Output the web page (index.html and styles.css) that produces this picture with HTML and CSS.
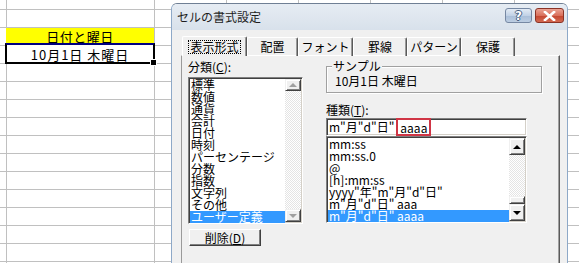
FILE: index.html
```html
<!DOCTYPE html>
<html lang="ja">
<head>
    <meta charset="UTF-8">
    <title>セルの書式設定</title>
    <link rel="stylesheet" href="styles.css">
</head>
<body>
    <div class="sheet">
        <div class="cell-title">日付と曜日</div>
        <div class="cell-date">10月1日 木曜日<span class="fill-handle"></span></div>
    </div>

    <div class="dialog">
        <div class="titlebar">
            <span class="title">セルの書式設定</span>
            <div class="caption-buttons">
                <span class="cap-btn help">?</span>
                <span class="cap-btn close">
                    <svg width="13" height="10" viewBox="0 0 13 10">
                        <path d="M2 1 L11 9 M11 1 L2 9" stroke="#fff" stroke-width="2.6" stroke-linecap="square"/>
                    </svg>
                </span>
            </div>
        </div>

        <div class="client">
            <div class="tabs">
                <div class="tab active"><span class="focus">表示形式</span></div>
                <div class="tab w51">配置</div>
                <div class="tab w55">フォント</div>
                <div class="tab w54">罫線</div>
                <div class="tab w54">パターン</div>
                <div class="tab w54">保護</div>
            </div>

            <div class="panel">
                <div class="col-left">
                    <div class="label">分類(<u>C</u>):</div>
                    <div class="listbox category">
                        <ul class="items">
                            <li>標準</li>
                            <li>数値</li>
                            <li>通貨</li>
                            <li>会計</li>
                            <li>日付</li>
                            <li>時刻</li>
                            <li>パーセンテージ</li>
                            <li>分数</li>
                            <li>指数</li>
                            <li>文字列</li>
                            <li>その他</li>
                            <li class="selected">ユーザー定義</li>
                        </ul>
                        <div class="scrollbar disabled">
                            <div class="arrow up"><i></i></div>
                            <div class="track"></div>
                            <div class="arrow down"><i></i></div>
                        </div>
                    </div>
                    <div class="button">削除(<u>D</u>)</div>
                </div>

                <div class="col-right">
                    <div class="sample">
                        <span class="sample-label">サンプル</span>
                        <div class="sample-value">10月1日 木曜日</div>
                    </div>
                    <div class="label kind">種類(<u>T</u>):</div>
                    <div class="textbox">m"月"d"日"<span class="mark">aaaa</span></div>
                    <div class="listbox types">
                        <ul class="items">
                            <li>mm:ss</li>
                            <li>mm:ss.0</li>
                            <li>@</li>
                            <li>[h]:mm:ss</li>
                            <li>yyyy"年"m"月"d"日"</li>
                            <li>m"月"d"日" aaa</li>
                            <li class="selected">m"月"d"日" aaaa</li>
                        </ul>
                        <div class="scrollbar">
                            <div class="arrow up big"><i></i></div>
                            <div class="track"></div>
                            <div class="thumb"></div>
                            <div class="arrow down big"><i></i></div>
                        </div>
                    </div>
                </div>
            </div>
        </div>
    </div>
</body>
</html>
```

FILE: styles.css
```css
body {
    margin: 0;
    width: 579px;
    height: 263px;
    overflow: hidden;
    position: relative;
    font-family: "Noto Sans CJK JP", "Noto Sans", sans-serif;
    font-size: 12px;
    color: #000;
}

/* spreadsheet behind the dialog */
.sheet {
    width: 579px;
    height: 263px;
    box-sizing: border-box;
    padding: 28px 0 0 6px;
    background:
        linear-gradient(#c0c0c0, #c0c0c0) 6px 0 / 1px 100% no-repeat,
        linear-gradient(#c0c0c0, #c0c0c0) 154px 0 / 1px 100% no-repeat,
        linear-gradient(#c0c0c0, #c0c0c0) 226px 0 / 1px 100% no-repeat,
        linear-gradient(#c0c0c0, #c0c0c0) 298px 0 / 1px 100% no-repeat,
        linear-gradient(#c0c0c0, #c0c0c0) 370px 0 / 1px 100% no-repeat,
        linear-gradient(#c0c0c0, #c0c0c0) 442px 0 / 1px 100% no-repeat,
        linear-gradient(#c0c0c0, #c0c0c0) 514px 0 / 1px 100% no-repeat,
        repeating-linear-gradient(#fff 0 9px, #c0c0c0 9px 10px, #fff 10px 18px);
}

.cell-title {
    width: 148px;
    height: 15px;
    line-height: 17px;
    background-color: #ffff00;
    text-align: center;
    font-size: 13px;
    letter-spacing: 0.5px;
}

.cell-date {
    position: relative;
    width: 150px;
    height: 21px;
    margin-left: -1px;
    box-sizing: border-box;
    border: 2px solid #000;
    border-top-color: #000080;
    background-color: #fff;
    text-align: center;
    font-size: 13px;
    line-height: 19px;
    letter-spacing: 1px;
}

.fill-handle {
    position: absolute;
    right: -4px;
    bottom: -4px;
    width: 5px;
    height: 5px;
    background-color: #000;
    border: 1px solid #fff;
}

/* dialog window */
.dialog {
    position: absolute;
    left: 171px;
    top: 3px;
    width: 397px;
    height: 280px;
    box-sizing: border-box;
    border: 1px solid #6f7f94;
    border-left-color: #8ea9c8;
    border-right-color: #8ea9c8;
    border-radius: 6px 6px 0 0;
    background-color: #f0f0f0;
    overflow: hidden;
}

.titlebar {
    height: 26px;
    display: flex;
    justify-content: space-between;
    align-items: flex-start;
    padding: 0 3px 0 5px;
    background: linear-gradient(#e6ecf3, #d8e1eb);
}

.title {
    margin-top: 7px;
    line-height: 12px;
    color: #1e1e1e;
}

.caption-buttons {
    display: flex;
    gap: 3px;
    margin-top: 4px;
}

.cap-btn {
    height: 15px;
    box-sizing: border-box;
    border-radius: 3px;
    display: flex;
    align-items: center;
    justify-content: center;
}

.help {
    width: 27px;
    border: 1px solid #7688a3;
    background: linear-gradient(#e3ebf5 0%, #c2d2e6 50%, #a9bed8 51%, #bccde2 100%);
    color: #fff;
    font-family: "DejaVu Sans", sans-serif;
    font-weight: bold;
    font-size: 12px;
    text-shadow: 1px 0 #47607f, -1px 0 #47607f, 0 1px #47607f, 0 -1px #47607f;
}

.close {
    width: 29px;
    border: 1px solid #8a3326;
    background: linear-gradient(#eba394 0%, #d9705c 50%, #c4452f 51%, #d36a52 100%);
}

.client {
    padding: 6px 7px 0 9px;
}

/* tabs */
.tabs {
    display: flex;
    align-items: flex-end;
    height: 20px;
    padding-left: 1px;
    margin-bottom: -1px;
    position: relative;
    z-index: 1;
}

.tab {
    height: 19px;
    box-sizing: border-box;
    border-top: 1px solid #fff;
    border-left: 1px solid #fff;
    border-right: 1px solid #5a5a5a;
    box-shadow: inset -1px 0 #9a9a9a;
    border-radius: 2px 2px 0 0;
    text-align: center;
    line-height: 18px;
}

.tab.active {
    width: 65px;
    height: 20px;
    background-color: #f0f0f0;
    line-height: 19px;
}

.focus {
    display: inline-block;
    padding: 0 1px;
    line-height: 12px;
    border: 1px dotted #000;
}

.w51 { width: 51px; }
.w55 { width: 55px; }
.w54 { width: 54px; }

.panel {
    display: flex;
    height: 220px;
    border-top: 1px solid #fff;
    border-left: 1px solid #9a9a9a;
    border-right: 1px solid #5a5a5a;
    box-shadow: inset -1px 0 #a0a0a0;
}

.col-left {
    width: 115px;
    padding: 5px 0 0 6px;
}

.label {
    line-height: 12px;
}

/* list boxes */
.listbox {
    display: flex;
    box-sizing: border-box;
    border: 1px solid;
    border-color: #808080 #fff #fff #808080;
    box-shadow: inset 1px 1px #404040, inset -1px -1px #d4d0c8;
    background-color: #fff;
    padding: 1px;
}

.listbox.category {
    width: 115px;
    height: 147px;
    margin-top: 4px;
}

.items {
    flex: 1;
    list-style: none;
    margin: 0;
    padding: 0;
}

.items li {
    height: 12px;
    line-height: 12px;
    padding-left: 1px;
    white-space: nowrap;
}

.items li.selected {
    background-color: #3399ff;
    color: #fff;
}

.scrollbar {
    width: 16px;
    display: flex;
    flex-direction: column;
}

.track {
    flex: 1;
    background: repeating-conic-gradient(#fff 0 25%, #e4e4e4 0 50%) 0 0 / 2px 2px;
}

.arrow,
.thumb {
    box-sizing: border-box;
    background-color: #f0f0f0;
    border: 1px solid;
    border-color: #f0f0f0 #404040 #404040 #f0f0f0;
    box-shadow: inset 1px 1px #fff, inset -1px -1px #808080;
    display: flex;
    align-items: center;
    justify-content: center;
}

.arrow { height: 12px; }
.arrow.down { height: 13px; }
.arrow.big { height: 17px; }
.thumb { height: 8px; }

.arrow i {
    width: 0;
    height: 0;
    border-left: 4px solid transparent;
    border-right: 4px solid transparent;
}

.arrow.up i { border-bottom: 4px solid #000; }
.arrow.down i { border-top: 4px solid #000; }
.disabled .arrow.up i { border-bottom-color: #a0a0a0; }
.disabled .arrow.down i { border-top-color: #a0a0a0; }

.button {
    width: 72px;
    height: 17px;
    margin: 5px 0 0 1px;
    box-sizing: border-box;
    border: 1px solid;
    border-color: #fff #404040 #404040 #fff;
    box-shadow: inset -1px -1px #808080;
    text-align: center;
    line-height: 15px;
}

/* right column */
.col-right {
    width: 216px;
    margin-left: 23px;
}

.sample {
    margin-top: 10px;
    height: 27px;
    box-sizing: border-box;
    border: 1px solid #a0a0a0;
    box-shadow: inset 1px 1px #fff, 1px 1px #fff;
    padding: 0 8px;
}

.sample-label {
    display: block;
    width: fit-content;
    margin: -7px 0 0 -3px;
    padding: 0 1px;
    background-color: #f0f0f0;
    line-height: 12px;
}

.sample-value {
    margin-top: 3px;
    line-height: 12px;
}

.label.kind {
    margin-top: 11px;
}

.textbox {
    width: 201px;
    height: 18px;
    margin-top: 2px;
    box-sizing: border-box;
    border: 1px solid;
    border-color: #808080 #fff #fff #808080;
    box-shadow: inset 1px 1px #404040, inset -1px -1px #d4d0c8;
    background-color: #fff;
    padding: 1px 2px;
    line-height: 14px;
    white-space: nowrap;
}

.mark {
    display: inline-block;
    vertical-align: top;
    position: relative;
    z-index: 2;
    height: 18px;
    margin: -2px 0 0 2px;
    padding: 0 2px;
    box-sizing: border-box;
    border: 2px solid #d03545;
    line-height: 15px;
}

.listbox.types {
    width: 201px;
    height: 87px;
}
```
